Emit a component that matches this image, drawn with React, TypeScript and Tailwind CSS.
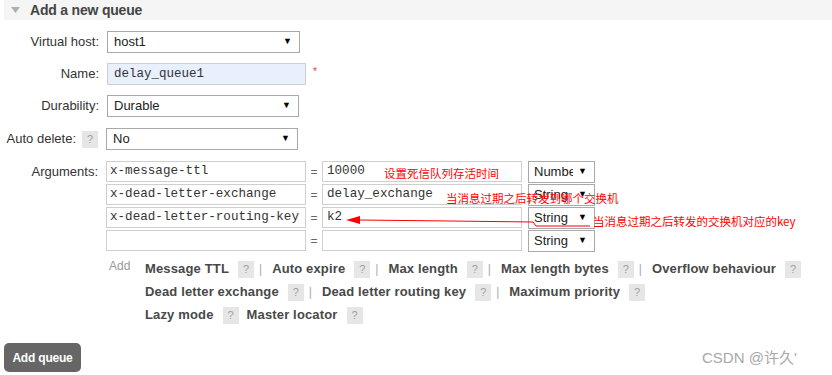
import React from 'react';

function Help() {
  return (
    <span className="inline-flex w-[16px] h-[17px] items-center justify-center bg-[#e6e6e6] text-[#a0a0a0] text-[11px] font-normal">
      ?
    </span>
  );
}

function FakeSelect({ value, width }: { value: string; width: string }) {
  return (
    <div className={`${width} h-[22px] flex items-center justify-between border border-[#a9a9a9] bg-white pl-[6px] pr-[7px] text-[13px] text-[#222]`}>
      <span>{value}</span>
      <span className="text-[9px] text-black">▼</span>
    </div>
  );
}

function Row({ label, children, className = '' }: { label: React.ReactNode; children: React.ReactNode; className?: string }) {
  return (
    <div className={`flex items-center h-[22px] ${className}`}>
      <div className="w-[99px] flex justify-end items-center text-[#333]">{label}</div>
      <div className="ml-[8px] flex items-center">{children}</div>
    </div>
  );
}

const args = [
  { key: 'x-message-ttl', value: '10000', type: 'Number' },
  { key: 'x-dead-letter-exchange', value: 'delay_exchange', type: 'String' },
  { key: 'x-dead-letter-routing-key', value: 'k2', type: 'String' },
  { key: '', value: '', type: 'String' },
];

type Link = { text: string; sep?: boolean };

const linkLines: Link[][] = [
  [
    { text: 'Message TTL', sep: true },
    { text: 'Auto expire', sep: true },
    { text: 'Max length', sep: true },
    { text: 'Max length bytes', sep: true },
    { text: 'Overflow behaviour' },
  ],
  [
    { text: 'Dead letter exchange', sep: true },
    { text: 'Dead letter routing key', sep: true },
    { text: 'Maximum priority' },
  ],
  [{ text: 'Lazy mode' }, { text: 'Master locator' }],
];

export default function App() {
  return (
    <div className="relative w-[832px] h-[375px] overflow-hidden bg-white font-['Liberation_Sans',Arial,sans-serif] text-[13px] text-[#333]">
      {/* Section header */}
      <div className="ml-[4px] h-[20px] bg-[#f5f5f5] flex items-center pl-[7px]">
        <svg width="9" height="6" viewBox="0 0 9 6">
          <path d="M0 0 L9 0 L4.5 6 Z" fill="#b0b0b0" />
        </svg>
        <span className="ml-[10px] font-bold text-[14px] text-[#444] tracking-[-0.2px]">Add a new queue</span>
      </div>

      {/* Form */}
      <div className="pt-[11px]">
        <Row label="Virtual host:">
          <FakeSelect value="host1" width="w-[193px]" />
        </Row>
        <Row label="Name:" className="mt-[10px]">
          <div className="w-[199px] h-[22px] border border-[#cfcfcf] bg-[#e8f0fe] pl-[6px] flex items-center font-['Liberation_Mono',monospace] text-[12.5px] text-[#333]">
            delay_queue1
          </div>
          <span className="ml-[7px] -mt-[6px] text-[#e34] text-[10px]">*</span>
        </Row>
        <Row label="Durability:" className="mt-[10px]">
          <FakeSelect value="Durable" width="w-[192px]" />
        </Row>
        <Row
          label={
            <>
              <span>Auto delete:</span>
              <span className="ml-[6px]">
                <Help />
              </span>
            </>
          }
          className="mt-[11px] -ml-[1px]"
        >
          <FakeSelect value="No" width="w-[192px]" />
        </Row>

        {/* Arguments */}
        <div className="flex mt-[11px]">
          <div className="w-[99px] text-right h-[21px] leading-[21px] pr-[1px]">Arguments:</div>
          <div className="ml-[7px] flex flex-col">
            <div className="flex flex-col gap-[2px]">
              {args.map((a, i) => (
                <div key={i} className="flex items-center h-[21px]">
                  <div className="w-[200px] h-[21px] border border-[#cfcfcf] pl-[3px] flex items-center font-['Liberation_Mono',monospace] text-[12.6px] text-[#333] whitespace-nowrap overflow-hidden">
                    {a.key}
                  </div>
                  <span className="w-[16px] text-center text-[#666] text-[12px]">=</span>
                  <div className="w-[200px] h-[21px] border border-[#cfcfcf] pl-[4px] flex items-center font-['Liberation_Mono',monospace] text-[12.6px] text-[#333] whitespace-nowrap">
                    {a.value}
                  </div>
                  <div className="ml-[6px] w-[67px] h-[22px] border border-[#a9a9a9] bg-white flex items-center pl-[5px] pr-[7px] text-[13px] text-[#222]">
                    <span className="w-[39px] overflow-hidden whitespace-nowrap">{a.type}</span>
                    <span className="ml-auto text-[9px] text-black">▼</span>
                  </div>
                </div>
              ))}
            </div>

            {/* Add links */}
            <div className="flex mt-[9px]">
              <div className="w-[39px] pl-[3px] text-[12px] text-[#999] leading-[17px] -mt-[2px]">Add</div>
              <div className="flex flex-col gap-[6px]">
                {linkLines.map((line, li) => (
                  <div key={li} className="flex items-center h-[17px]">
                    {line.map((l, i) => (
                      <React.Fragment key={l.text}>
                        <span className={`font-bold text-[13px] tracking-[0.15px] text-[#484848] ${i > 0 ? (line[i - 1].sep ? 'ml-[10px]' : 'ml-[8px]') : ''}`}>
                          {l.text}
                        </span>
                        <span className="ml-[9px]">
                          <Help />
                        </span>
                        {l.sep && <span className="ml-[5px] text-[#aaa] text-[12px]">|</span>}
                      </React.Fragment>
                    ))}
                  </div>
                ))}
              </div>
            </div>
          </div>
        </div>

        <button className="ml-[4px] mt-[20px] w-[77px] h-[29px] rounded-[5px] bg-[#666] text-white font-bold text-[12px] tracking-[-0.2px]">
          Add queue
        </button>
      </div>

      {/* Red annotations */}
      <span className="absolute left-[384px] top-[165px] text-[11.5px] leading-[16px] text-[#f00] font-['Noto_Sans_CJK_SC',sans-serif]">
        设置死信队列存活时间
      </span>
      <span className="absolute left-[446px] top-[190px] text-[11.5px] leading-[16px] text-[#f00] font-['Noto_Sans_CJK_SC',sans-serif]">
        当消息过期之后转发到哪个交换机
      </span>
      <span className="absolute left-[593px] top-[213px] text-[11.5px] leading-[16px] text-[#f00] font-['Noto_Sans_CJK_SC',sans-serif]">
        当消息过期之后转发的交换机对应的key
      </span>
      <svg className="absolute left-0 top-0" width="832" height="375">
        <polyline points="358,220 450,221 533,222 536,226 590,226" fill="none" stroke="#f00" strokeWidth="1" />
        <path d="M346 220 L360 216 L360 224 Z" fill="#f00" />
      </svg>

      {/* Watermark */}
      <span className="absolute left-[702px] top-[347px] text-[15px] text-[#a8a8a8] font-['Liberation_Sans','Noto_Sans_CJK_SC',sans-serif]">
        CSDN @许久'
      </span>
    </div>
  );
}
